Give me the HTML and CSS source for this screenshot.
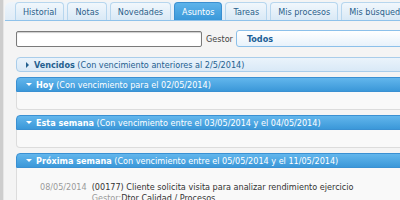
FILE: index.html
```html
<!DOCTYPE html>
<html lang="es">
<head>
<meta charset="utf-8">
<link rel="stylesheet" href="styles.css">
</head>
<body>
<div class="frame">
  <div class="edge"></div>
  <div class="main">
    <div class="tabs">
      <div class="tab">Historial</div>
      <div class="tab">Notas</div>
      <div class="tab">Novedades</div>
      <div class="tab active">Asuntos</div>
      <div class="tab">Tareas</div>
      <div class="tab">Mis procesos</div>
      <div class="tab">Mis búsquedas</div>
    </div>
    <div class="search">
      <div class="input"></div>
      <span class="label">Gestor</span>
      <div class="select">Todos</div>
    </div>
    <div class="sections">
      <div class="section">
        <div class="head closed"><span class="arrow-right"></span><b>Vencidos</b>&nbsp;(Con vencimiento anteriores al 2/5/2014)</div>
      </div>
      <div class="section">
        <div class="head open"><span class="arrow-down"></span><b>Hoy</b>&nbsp;(Con vencimiento para el 02/05/2014)</div>
        <div class="body"></div>
      </div>
      <div class="section">
        <div class="head open"><span class="arrow-down"></span><b>Esta semana</b>&nbsp;(Con vencimiento entre el 03/05/2014 y el 04/05/2014)</div>
        <div class="body"></div>
      </div>
      <div class="section">
        <div class="head open"><span class="arrow-down"></span><b>Próxima semana</b>&nbsp;(Con vencimiento entre el 05/05/2014 y el 11/05/2014)</div>
        <div class="body big">
          <div class="row">
            <span class="date">08/05/2014</span>
            <div class="desc">
              <div class="title">(00177) Cliente solicita visita para analizar rendimiento ejercicio</div>
              <div class="meta"><span class="key">Gestor:</span>Dtor Calidad / Procesos</div>
            </div>
          </div>
        </div>
      </div>
    </div>
  </div>
</div>
</body>
</html>
```
FILE: styles.css
```css
html, body {
  margin: 0;
  padding: 0;
  width: 400px;
  height: 200px;
  overflow: hidden;
}
body {
  background: #f4f4f4;
  font-family: "DejaVu Sans Condensed", "DejaVu Sans", sans-serif;
  font-size: 9px;
  color: #333;
}
.frame {
  display: flex;
  height: 200px;
}
.edge {
  width: 3px;
  flex: none;
  background: #cdcdcd;
  border-right: 1px solid #e6e6e6;
}
.main {
  flex: none;
  width: 440px;
  display: flex;
  flex-direction: column;
}
.tabs {
  margin: 2px 0 0 1px;
  height: 19px;
  padding-left: 10px;
  display: flex;
  align-items: flex-end;
  gap: 3px;
  background: linear-gradient(#eef5fb, #dfecf7);
  border-top-left-radius: 6px;
  border-bottom: 1px solid #8fc2ea;
}
.tab {
  height: 17px;
  padding: 0 7px;
  display: flex;
  align-items: center;
  color: #2b5f8a;
  background: linear-gradient(#f1f7fc, #d9e9f6);
  border: 1px solid #b7d6ee;
  border-bottom: none;
  border-radius: 4px 4px 0 0;
}
.tab.active {
  color: #fff;
  background: linear-gradient(#5db3ea, #3a98d9);
  border-color: #3a8fd0;
}
.search {
  margin: 9px 0 0 12px;
  display: flex;
  align-items: center;
  height: 17px;
}
.input {
  width: 184px;
  height: 14px;
  border: 1px solid #7a7a7a;
  border-radius: 2px;
  background: #fff;
  box-shadow: inset 0 1px 1px #ccc;
}
.label {
  margin: 0 3px 0 4px;
  color: #444;
}
.select {
  flex: 1;
  height: 15px;
  padding-left: 10px;
  display: flex;
  align-items: center;
  font-weight: bold;
  color: #1c5f96;
  background: linear-gradient(#ffffff, #e8f2fb);
  border: 1px solid #8cc0ea;
  border-radius: 3px;
}
.sections {
  margin: 10px 0 0 12px;
  display: flex;
  flex-direction: column;
  gap: 5px;
}
.section {
  display: flex;
  flex-direction: column;
}
.head {
  height: 13px;
  padding-left: 9px;
  display: flex;
  align-items: center;
  border-radius: 4px;
  white-space: nowrap;
}
.head.closed {
  color: #24608f;
  background: linear-gradient(#eaf3fb, #d9e9f7);
  border: 1px solid #a9cdea;
}
.head.open {
  color: #fff;
  background: linear-gradient(#62b6ec, #3b98d9);
  border: 1px solid #3a90d2;
  border-radius: 4px 4px 0 0;
}
.arrow-right {
  width: 0;
  height: 0;
  border-top: 3px solid transparent;
  border-bottom: 3px solid transparent;
  border-left: 3px solid #24608f;
  margin-right: 5px;
}
.arrow-down {
  width: 0;
  height: 0;
  border-left: 3px solid transparent;
  border-right: 3px solid transparent;
  border-top: 3px solid #fff;
  margin-right: 4px;
}
.body {
  height: 17px;
  background: #f9f9f9;
  border: 1px solid #dcdcdc;
  border-top: none;
  border-radius: 0 0 4px 4px;
}
.body.big {
  height: 60px;
}
.row {
  display: flex;
  margin: 14px 0 0 23px;
  gap: 5px;
}
.date {
  color: #9a9a9a;
}
.desc {
  display: flex;
  flex-direction: column;
  gap: 1px;
}
.title {
  color: #333;
}
.meta {
  color: #333;
}
.key {
  color: #9a9a9a;
}
```
